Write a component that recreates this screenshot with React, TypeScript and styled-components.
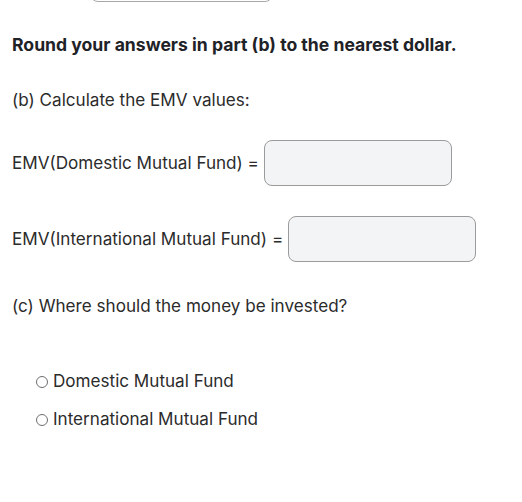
import styled, { createGlobalStyle } from "styled-components";

const GlobalStyle = createGlobalStyle`
  html, body {
    margin: 0;
    padding: 0;
    background: #ffffff;
  }
  body {
    font-family: Inter, "Liberation Sans", Arial, sans-serif;
    color: #2b2b2b;
  }
`;

const Page = styled.div`
  width: 522px;
  height: 502px;
  overflow: hidden;
  padding: 0 12px;
  box-sizing: border-box;
`;

const TopBox = styled.div`
  width: 183px;
  height: 40px;
  margin: -38px 0 0 78px;
  border: 1px solid #a8a8a8;
  border-radius: 8px;
  box-sizing: border-box;
`;

const Note = styled.p`
  margin: 32px 0 0;
  font-size: 17.6px;
  font-weight: 700;
  line-height: 22px;
  color: #1f2227;
`;

const Part = styled.p<{ $top: number }>`
  margin: ${(p) => p.$top}px 0 0;
  font-size: 17.1px;
  line-height: 22px;
`;

const Row = styled.div<{ $top: number }>`
  display: flex;
  align-items: center;
  gap: 5px;
  margin-top: ${(p) => p.$top}px;
`;

const Label = styled.span`
  font-size: 17.1px;
  line-height: 22px;
`;

const Field = styled.input`
  width: 188px;
  height: 46px;
  box-sizing: border-box;
  border: 1px solid #9b9b9b;
  border-radius: 8px;
  background: #f3f4f6;
  padding: 0 10px;
  font: inherit;
  outline: none;
`;

const Options = styled.div`
  display: flex;
  flex-direction: column;
  gap: 16px;
  margin: 53px 0 0 24px;
`;

const Option = styled.label`
  display: flex;
  align-items: center;
  gap: 5px;
  font-size: 17.1px;
  line-height: 22px;
`;

const Radio = styled.span`
  width: 12px;
  height: 12px;
  border: 1px solid #6e6e6e;
  border-radius: 50%;
  box-sizing: border-box;
  margin-top: 1px;
`;

export default function App() {
  return (
    <>
      <GlobalStyle />
      <Page>
        <TopBox />
        <Note>Round your answers in part (b) to the nearest dollar.</Note>
        <Part $top={33}>(b) Calculate the EMV values:</Part>
        <Row $top={29}>
          <Label>EMV(Domestic Mutual Fund) =</Label>
          <Field type="text" />
        </Row>
        <Row $top={30}>
          <Label>EMV(International Mutual Fund) =</Label>
          <Field type="text" />
        </Row>
        <Part $top={33}>(c) Where should the money be invested?</Part>
        <Options>
          <Option>
            <Radio />
            Domestic Mutual Fund
          </Option>
          <Option>
            <Radio />
            International Mutual Fund
          </Option>
        </Options>
      </Page>
    </>
  );
}
